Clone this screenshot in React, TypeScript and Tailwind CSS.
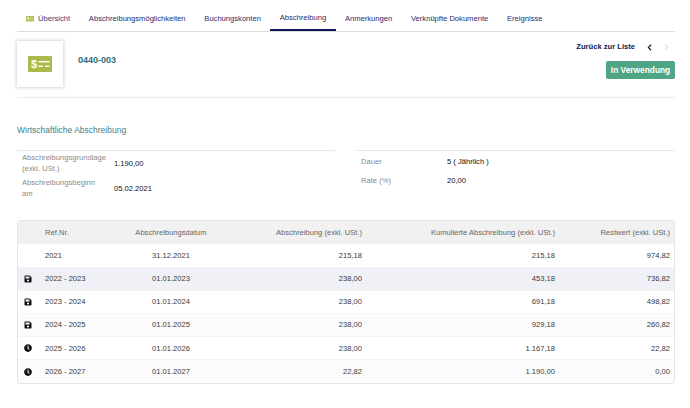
import { FaSave, FaClock, FaChevronLeft, FaChevronRight } from 'react-icons/fa';

const tabs = [
  'Abschreibungsmöglichkeiten',
  'Buchungskonten',
  'Abschreibung',
  'Anmerkungen',
  'Verknüpfte Dokumente',
  'Ereignisse',
];

const rows = [
  { icon: null, ref: '2021', date: '31.12.2021', amount: '215,18', total: '215,18', rest: '974,82', bg: 'bg-white' },
  { icon: 'save', ref: '2022 - 2023', date: '01.01.2023', amount: '238,00', total: '453,18', rest: '736,82', bg: 'bg-[#f0f1f6]' },
  { icon: 'save', ref: '2023 - 2024', date: '01.01.2024', amount: '238,00', total: '691,18', rest: '498,82', bg: 'bg-white' },
  { icon: 'save', ref: '2024 - 2025', date: '01.01.2025', amount: '238,00', total: '929,18', rest: '260,82', bg: 'bg-[#fbfbfb]' },
  { icon: 'clock', ref: '2025 - 2026', date: '01.01.2026', amount: '238,00', total: '1.167,18', rest: '22,82', bg: 'bg-white' },
  { icon: 'clock', ref: '2026 - 2027', date: '01.01.2027', amount: '22,82', total: '1.190,00', rest: '0,00', bg: 'bg-[#fbfbfb]' },
];

const CheckIcon = ({ className }: { className: string }) => (
  <svg className={className} viewBox="0 0 24 16">
    <rect width="24" height="16" fill="#aeb94b" />
    <text x="3" y="12" fontSize="11" fontWeight="700" fill="#fff" fontFamily="'Liberation Sans', sans-serif">$</text>
    <rect x="10.5" y="5" width="11" height="1.4" fill="#fff" />
    <rect x="10.5" y="9.5" width="4.5" height="1.4" fill="#fff" />
    <rect x="17" y="9.5" width="4.5" height="1.4" fill="#fff" />
  </svg>
);

export default function App() {
  return (
    <div className="h-[408px] w-[690px] overflow-hidden bg-white pl-[17px] pr-[15px] font-['Liberation_Sans',Arial,sans-serif] text-[7.6px] text-[#3a3a3a]">
      {/* tabs */}
      <div className="flex h-[32px] items-center border-b border-[#dcdcdc] text-[#2c2c6c]">
        <div className="flex h-full items-center gap-[4px] pl-[9px] pr-[9.4px] pt-[7px] text-[#3a3a6e]">
          <CheckIcon className="h-[5.5px] w-[8px]" />
          <span>Übersicht</span>
        </div>
        {tabs.map((tab) => (
          <div
            key={tab}
            className={`flex h-full items-center px-[9.4px] pt-[7px] ${
              tab === 'Abschreibung' ? 'border-b-2 border-[#14145a] text-[#2c2c60]' : ''
            }`}
          >
            {tab}
          </div>
        ))}
      </div>

      {/* header */}
      <div className="flex h-[66px] justify-between border-b border-[#ececec] pt-[9px]">
        <div className="flex">
          <div className="flex h-[46px] w-[46px] items-center justify-center bg-white shadow-[0_0_4px_rgba(0,0,0,0.25)]">
            <CheckIcon className="h-[16px] w-[24px]" />
          </div>
          <div className="ml-[15px] mt-[13px] text-[9px] font-bold leading-[12px] text-[#2d7078]">0440-003</div>
        </div>
        <div className="flex flex-col items-end">
          <div className="flex h-[12px] items-center">
            <span className="font-bold text-[#15154f]">Zurück zur Liste</span>
            <FaChevronLeft className="ml-[11px] text-[7px] text-[#111]" />
            <FaChevronRight className="ml-[10px] mr-[5px] text-[7px] text-[#dddddd]" />
          </div>
          <div className="mt-[8px] flex h-[18px] w-[69px] items-center justify-center rounded-[2px] bg-[#4fa584] text-[8.35px] font-bold text-white">
            In Verwendung
          </div>
        </div>
      </div>

      {/* section title */}
      <div className="mt-[26px] text-[8.5px] leading-[12px] text-[#3f7f86]">Wirtschaftliche Abschreibung</div>

      {/* info */}
      <div className="mt-[14px] flex justify-between">
        <div className="w-[318px] border-t border-[#e8e8e8] pl-[5px] pt-[2px]">
          <div className="flex items-center">
            <div className="mr-[7px] w-[85px] leading-[10.5px] text-[#8a8a8a]">Abschreibungsgrundlage (exkl. USt.)</div>
            <div className="text-[#111]">1.190,00</div>
          </div>
          <div className="mt-[4px] flex items-center">
            <div className="mr-[7px] w-[85px] leading-[10.5px] text-[#8a8a8a]">Abschreibungsbeginn am</div>
            <div className="text-[#111]">05.02.2021</div>
          </div>
        </div>
        <div className="w-[319px] border-t border-[#e8e8e8] pl-[5px] pt-[5px]">
          <div className="flex h-[12px] items-center">
            <div className="w-[86px] text-[#8a8a8a]">Dauer</div>
            <div className="text-[#111]">5 ( Jährlich )</div>
          </div>
          <div className="mt-[7px] flex h-[12px] items-center">
            <div className="w-[86px] text-[#8a8a8a]">Rate (%)</div>
            <div className="text-[#111]">20,00</div>
          </div>
        </div>
      </div>

      {/* table */}
      <div className="mt-[21px] overflow-hidden rounded-[3px] border border-[#e6e6e6]">
        <table className="w-full table-fixed border-collapse">
          <colgroup>
            <col className="w-[21px]" />
            <col className="w-[71px]" />
            <col className="w-[122px]" />
            <col className="w-[136px]" />
            <col className="w-[193px]" />
            <col />
          </colgroup>
          <thead>
            <tr className="h-[23px] bg-[#f1f1f1] text-[#666]">
              <th className="font-normal" />
              <th className="px-[6px] text-left font-normal">Ref.Nr.</th>
              <th className="text-center font-normal">Abschreibungsdatum</th>
              <th className="px-[6px] text-right font-normal">Abschreibung (exkl. USt.)</th>
              <th className="px-[6px] text-right font-normal">Kumulierte Abschreibung (exkl. USt.)</th>
              <th className="pl-[6px] pr-[4px] text-right font-normal">Restwert (exkl. USt.)</th>
            </tr>
          </thead>
          <tbody>
            {rows.map((row) => (
              <tr key={row.ref} className={`h-[23.2px] border-b border-[#f4f4f4] last:border-b-0 ${row.bg}`}>
                <td className="pl-[6px] text-[8px] text-[#111]">
                  {row.icon === 'save' && <FaSave className="block" />}
                  {row.icon === 'clock' && <FaClock className="block" />}
                </td>
                <td className="px-[6px]">{row.ref}</td>
                <td className="text-center">{row.date}</td>
                <td className="px-[6px] text-right">{row.amount}</td>
                <td className="px-[6px] text-right">{row.total}</td>
                <td className="pl-[6px] pr-[4px] text-right">{row.rest}</td>
              </tr>
            ))}
          </tbody>
        </table>
      </div>
    </div>
  );
}
